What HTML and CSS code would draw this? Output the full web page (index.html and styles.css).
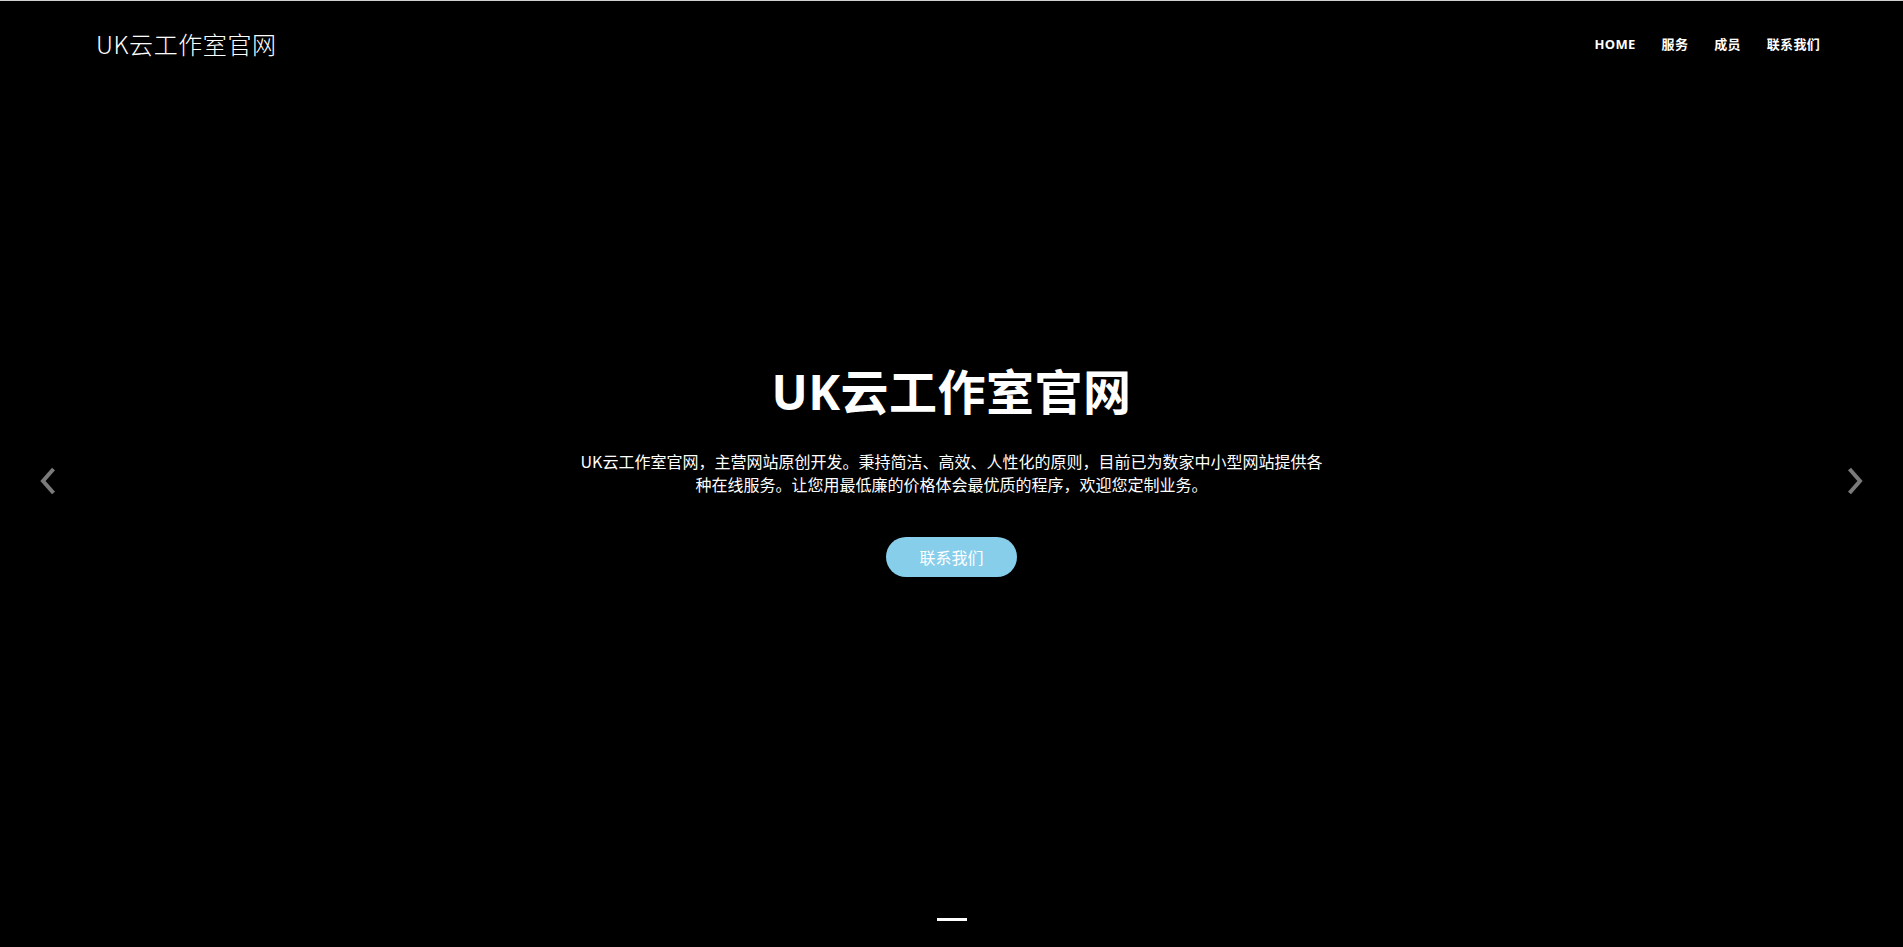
FILE: index.html
```html
<!DOCTYPE html>
<html lang="zh-CN">
<head>
<meta charset="utf-8">
<title>UK云工作室官网</title>
<link rel="stylesheet" href="styles.css">
</head>
<body>
<div class="page">
  <header class="site-header">
    <a class="brand" href="#">UK云工作室官网</a>
    <nav class="main-nav">
      <a class="nav-link" href="#">HOME</a>
      <a class="nav-link" href="#">服务</a>
      <a class="nav-link" href="#">成员</a>
      <a class="nav-link" href="#">联系我们</a>
    </nav>
  </header>
  <section class="hero">
    <div class="hero-content">
      <h1 class="hero-title">UK云工作室官网</h1>
      <p class="hero-text">UK云工作室官网，主营网站原创开发。秉持简洁、高效、人性化的原则，目前已为数家中小型网站提供各种在线服务。让您用最低廉的价格体会最优质的程序，欢迎您定制业务。</p>
      <a class="hero-btn" href="#">联系我们</a>
    </div>
    <a class="carousel-control prev" href="#" aria-label="上一张">
      <svg viewBox="0 0 16 28" width="16" height="28"><path d="M13.5 2 L3 14 L13.5 26" fill="none" stroke="#7a7a7a" stroke-width="4" stroke-linecap="butt" stroke-linejoin="miter"/></svg>
    </a>
    <a class="carousel-control next" href="#" aria-label="下一张">
      <svg viewBox="0 0 16 28" width="16" height="28"><path d="M2.5 2 L13 14 L2.5 26" fill="none" stroke="#7a7a7a" stroke-width="4" stroke-linecap="butt" stroke-linejoin="miter"/></svg>
    </a>
    <ol class="carousel-indicators">
      <li class="indicator active"></li>
    </ol>
  </section>
</div>
</body>
</html>
```

FILE: styles.css
```css
html, body {
  margin: 0;
  padding: 0;
  background: #000;
}

body {
  border-top: 1px solid #cfcfcf;
  font-family: "Open Sans", "Noto Sans CJK SC", sans-serif;
  color: #fff;
  overflow: hidden;
}

.page {
  position: relative;
}

.site-header {
  position: absolute;
  top: 0;
  left: 0;
  right: 0;
  height: 86px;
  display: flex;
  align-items: center;
  justify-content: space-between;
  padding: 0 83px 0 96px;
  z-index: 2;
}

.brand {
  color: #fff;
  text-decoration: none;
  font-family: "Noto Sans CJK SC", sans-serif;
  font-weight: 300;
  font-size: 24px;
  line-height: 1;
  letter-spacing: 0.6px;
}

.main-nav {
  display: flex;
  gap: 26px;
  align-items: center;
}

.nav-link {
  color: #fff;
  text-decoration: none;
  font-family: "Open Sans", "Noto Sans CJK SC", sans-serif;
  font-weight: 700;
  font-size: 13px;
  line-height: 1;
  letter-spacing: 0.3px;
}

.hero {
  position: relative;
  height: calc(100vh - 1px);
  display: flex;
  align-items: center;
  justify-content: center;
  padding-bottom: 8px;
  box-sizing: border-box;
}

.hero-content {
  width: 760px;
  display: flex;
  flex-direction: column;
  align-items: center;
  text-align: center;
}

.hero-title {
  margin: 0;
  font-family: "Open Sans", "Noto Sans CJK SC", sans-serif;
  font-weight: 700;
  font-size: 48px;
  line-height: 58px;
  letter-spacing: 0.5px;
}

.hero-text {
  margin: 29px 0 0;
  font-family: "Noto Sans CJK SC", sans-serif;
  font-size: 16px;
  line-height: 23px;
  width: 750px;
}

.hero-btn {
  margin-top: 41px;
  display: flex;
  align-items: center;
  justify-content: center;
  width: 131px;
  height: 40px;
  border-radius: 20px;
  background: #87ceeb;
  color: #fff;
  text-decoration: none;
  font-family: "Noto Sans CJK SC", sans-serif;
  font-size: 16px;
}

.carousel-control {
  position: absolute;
  top: 50%;
  margin-top: -7px;
  width: 16px;
  height: 28px;
  display: block;
}

.carousel-control svg {
  display: block;
}

.carousel-control.prev {
  left: 40px;
}

.carousel-control.next {
  right: 40px;
}

.carousel-indicators {
  position: absolute;
  left: 50%;
  bottom: 26px;
  transform: translateX(-50%);
  margin: 0;
  padding: 0;
  list-style: none;
  display: flex;
}

.indicator {
  width: 30px;
  height: 3px;
  background: #fff;
}
```
